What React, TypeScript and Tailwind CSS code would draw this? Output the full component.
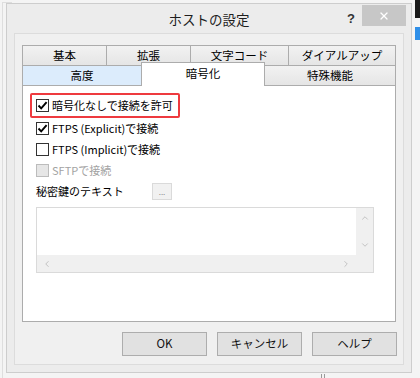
import { ChevronUp, ChevronDown, ChevronLeft, ChevronRight, X } from 'lucide-react';

const jp = "font-['Noto_Sans_CJK_JP','Noto_Sans',sans-serif]";

function CheckBox({ checked, disabled }: { checked?: boolean; disabled?: boolean }) {
  return (
    <span
      className={`flex h-[13px] w-[13px] shrink-0 items-center justify-center border ${
        disabled ? 'border-[#bcbcbc] bg-[#e6e6e6]' : 'border-[#333333] bg-white'
      }`}
    >
      {checked && (
        <svg width="11" height="11" viewBox="0 0 11 11">
          <path d="M1.5 5.5 L4.2 8.3 L9.6 2.2" fill="none" stroke="#000" strokeWidth="1.9" />
        </svg>
      )}
    </span>
  );
}

function Option({ label, checked, disabled }: { label: string; checked?: boolean; disabled?: boolean }) {
  return (
    <div className="flex items-center gap-[3px] whitespace-nowrap text-[11px]">
      <CheckBox checked={checked} disabled={disabled} />
      <span className={disabled ? 'text-[#a3a3a3]' : 'text-black'}>{label}</span>
    </div>
  );
}

const topTabs = [
  { label: '基本', w: 'w-[84px]' },
  { label: '拡張', w: 'w-[84px]' },
  { label: '文字コード', w: 'w-[98px]' },
  { label: 'ダイアルアップ', w: 'w-[108px]' },
];

export default function App() {
  return (
    <div className={`relative h-[378px] w-[420px] overflow-hidden bg-[#f4f4f4] text-[11.5px] ${jp}`}>
      {/* windows behind */}
      <div className="absolute right-0 top-0 h-[18px] w-[5px] bg-[#1a1a1a]" />
      <div className="absolute right-0 top-[27px] h-[13px] w-[5px] bg-[#2f8fe8]" />
      <div className="absolute left-[2px] top-[2px] h-[376px] w-[10px] border-l border-t border-[#dedede]" />

      {/* dialog */}
      <div className="relative ml-[6px] mt-[3px] flex h-[370px] w-[406px] flex-col border border-[#cdcdcd] bg-[#ececec] px-[7px] pb-[7px]">
        {/* title bar */}
        <div className="relative flex h-[29px] items-center justify-center">
          <span className="pt-[2px] text-[13.5px] text-[#1e1e1e]">ホストの設定</span>
          <span className="absolute right-[49px] top-[5px] font-['Liberation_Sans',sans-serif] text-[13px] font-bold text-[#333]">
            ?
          </span>
          <div className="absolute right-[-2px] top-[1px] flex h-[21px] w-[44px] items-center justify-center bg-[#c7c7c7]">
            <X size={12} strokeWidth={2.5} className="text-white" />
          </div>
        </div>

        {/* client area */}
        <div className="flex flex-1 flex-col border border-[#dcdcdc] bg-[#f0f0f0]">
          <div className="ml-[7px] mt-[11px] w-[374px]">
            {/* tabs row 1 */}
            <div className="flex h-[20px]">
              {topTabs.map((t, i) => (
                <div
                  key={t.label}
                  className={`${t.w} flex items-center justify-center border-l border-t border-[#acacac] bg-gradient-to-b from-[#f2f2f2] to-[#e5e5e5] ${
                    i === topTabs.length - 1 ? 'border-r' : ''
                  }`}
                >
                  {t.label}
                </div>
              ))}
            </div>
            {/* tabs row 2 */}
            <div className="flex items-end">
              <div className="flex h-[20px] w-[119px] items-center justify-center border-l border-t border-[#acacac] bg-[#dcecfc]">
                高度
              </div>
              <div className="relative z-10 -mb-px -mt-[3px] flex h-[24px] w-[124px] items-start justify-center border-l border-r border-t border-[#acacac] bg-white pt-[2px]">
                暗号化
              </div>
              <div className="flex h-[20px] w-[131px] items-center justify-center border-r border-t border-[#acacac] bg-gradient-to-b from-[#f2f2f2] to-[#e5e5e5]">
                特殊機能
              </div>
            </div>

            {/* panel */}
            <div className="flex h-[237px] flex-col border border-[#acacac] bg-white pl-[7px] pt-[7px]">
              <div className="flex h-[25px] w-[150px] items-center rounded-[2px] border-2 border-[#ee3a3f] pl-[4px]">
                <Option label="暗号化なしで接続を許可" checked />
              </div>
              <div className="flex flex-col pl-[6px]">
                <div className="flex h-[21px] items-center">
                  <Option label="FTPS (Explicit)で接続" checked />
                </div>
                <div className="flex h-[21px] items-center">
                  <Option label="FTPS (Implicit)で接続" />
                </div>
                <div className="flex h-[21px] items-center">
                  <Option label="SFTPで接続" disabled />
                </div>
                <div className="flex h-[20px] items-center text-[11px]">
                  <span className="w-[116px] whitespace-nowrap">秘密鍵のテキスト</span>
                  <div className="flex h-[17px] w-[20px] items-end justify-center border border-[#dadada] bg-[#f1f1f1] pb-[3px] text-[8px] leading-none text-[#8a8a8a]">
                    ...
                  </div>
                </div>

                {/* text area */}
                <div className="mt-[6px] grid h-[66px] w-[338px] grid-cols-[1fr_17px] grid-rows-[1fr_17px] border border-[#dadada]">
                  <div className="bg-white" />
                  <div className="flex flex-col items-center justify-between bg-[#f0f0f0] py-[5px]">
                    <ChevronUp size={10} strokeWidth={1.5} className="text-[#a6a6a6]" />
                    <ChevronDown size={10} strokeWidth={1.5} className="text-[#a6a6a6]" />
                  </div>
                  <div className="flex items-center justify-between bg-[#f0f0f0] px-[5px]">
                    <ChevronLeft size={10} strokeWidth={1.5} className="text-[#a6a6a6]" />
                    <ChevronRight size={10} strokeWidth={1.5} className="text-[#a6a6a6]" />
                  </div>
                  <div className="bg-[#f0f0f0]" />
                </div>
              </div>
            </div>
          </div>

          {/* buttons */}
          <div className="mr-[6px] mt-[10px] flex justify-end gap-[10px]">
            {['OK', 'キャンセル', 'ヘルプ'].map((b) => (
              <div
                key={b}
                className="flex h-[24px] w-[85px] items-center justify-center border border-[#adadad] bg-[#e1e1e1] text-[#111]"
              >
                {b}
              </div>
            ))}
          </div>
        </div>
      </div>

      <div className="absolute bottom-0 left-[321px] h-[4px] w-[4px] border-l border-r border-[#9a9a9a]" />
    </div>
  );
}
